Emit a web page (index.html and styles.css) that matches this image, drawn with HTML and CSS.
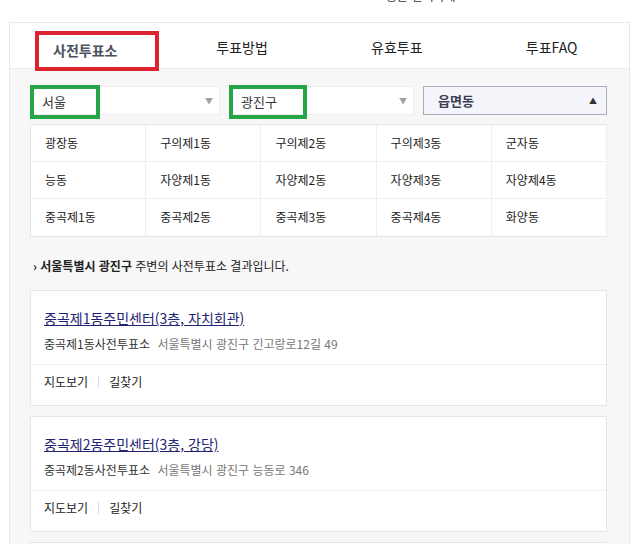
FILE: index.html
```html
<!DOCTYPE html>
<html lang="ko">
<head>
    <meta charset="UTF-8">
    <meta name="viewport" content="width=device-width, initial-scale=1.0">
    <title>사전투표소</title>
    <link rel="stylesheet" href="styles.css">
</head>
<body>
    <div class="top-cut">
        <p class="top-text">동을 선택하세요</p>
    </div>

    <div class="vote-panel">
        <!-- Tabs -->
        <ul class="tabs">
            <li class="tab active"><span class="mark-red">사전투표소</span></li>
            <li class="tab">투표방법</li>
            <li class="tab">유효투표</li>
            <li class="tab">투표FAQ</li>
        </ul>

        <div class="panel-body">
            <!-- Region selects -->
            <div class="selects">
                <div class="select">
                    <span class="mark-green">서울</span>
                    <span class="arrow">&#9660;</span>
                </div>
                <div class="select">
                    <span class="mark-green">광진구</span>
                    <span class="arrow">&#9660;</span>
                </div>
                <div class="select open">
                    <span class="select-label">읍면동</span>
                    <span class="arrow up">&#9650;</span>
                </div>
            </div>

            <ul class="dong-grid">
                <li>광장동</li>
                <li>구의제1동</li>
                <li>구의제2동</li>
                <li>구의제3동</li>
                <li>군자동</li>
                <li>능동</li>
                <li>자양제1동</li>
                <li>자양제2동</li>
                <li>자양제3동</li>
                <li>자양제4동</li>
                <li>중곡제1동</li>
                <li>중곡제2동</li>
                <li>중곡제3동</li>
                <li>중곡제4동</li>
                <li>화양동</li>
            </ul>

            <p class="result-info"><span class="chev">&#8250;</span> <b>서울특별시 광진구</b> 주변의 사전투표소 결과입니다.</p>

            <div class="place-card">
                <div class="place-main">
                    <a class="place-title" href="#">중곡제1동주민센터(3층, 자치회관)</a>
                    <p class="place-sub">중곡제1동사전투표소 <span class="addr">서울특별시 광진구 긴고랑로12길 49</span></p>
                </div>
                <div class="place-links">
                    <a href="#">지도보기</a><span class="sep"></span><a href="#">길찾기</a>
                </div>
            </div>

            <div class="place-card">
                <div class="place-main">
                    <a class="place-title" href="#">중곡제2동주민센터(3층, 강당)</a>
                    <p class="place-sub">중곡제2동사전투표소 <span class="addr">서울특별시 광진구 능동로 346</span></p>
                </div>
                <div class="place-links">
                    <a href="#">지도보기</a><span class="sep"></span><a href="#">길찾기</a>
                </div>
            </div>

            <div class="place-card last"></div>
        </div>
    </div>
</body>
</html>
```

FILE: styles.css
```css
* {
    margin: 0;
    padding: 0;
    box-sizing: border-box;
}

body {
    font-family: "Noto Sans CJK KR", "Noto Sans", sans-serif;
    color: #222;
    background-color: #ffffff;
    font-size: 12px;
    height: 544px;
    overflow: hidden;
}

.top-cut {
    height: 22px;
    overflow: hidden;
    padding-left: 386px;
}

.top-text {
    margin-top: -12px;
    font-size: 12px;
    line-height: 16px;
    color: #333;
}

.vote-panel {
    margin-left: 9px;
    width: 621px;
    border: 1px solid #e8e8e8;
    border-bottom: none;
}

.tabs {
    list-style: none;
    display: grid;
    grid-template-columns: repeat(4, minmax(0, 1fr));
    height: 46px;
    background-color: #ffffff;
    border-bottom: 1px solid #ececec;
}

.tab {
    display: flex;
    align-items: center;
    justify-content: center;
    font-size: 14px;
    color: #222;
}

.tab.active {
    align-items: flex-start;
    justify-content: flex-start;
    padding-left: 25px;
    color: #4a5261;
    font-weight: bold;
}

.mark-red {
    display: inline-block;
    width: 124px;
    height: 40px;
    margin-top: 8px;
    border: 4px solid #dc2430;
    padding-left: 14px;
    line-height: 30px;
    position: relative;
    z-index: 1;
}

.panel-body {
    background-color: #f7f7f7;
    padding: 17px 22px 0 20px;
}

.selects {
    display: grid;
    grid-template-columns: 190px 185px 1fr;
    column-gap: 9px;
    height: 29px;
}

.select {
    height: 29px;
    background-color: #ffffff;
    border: 1px solid #eeeeee;
    display: flex;
    align-items: center;
}

.select.open {
    background-color: #f3f5fa;
    border-color: #a8adb9;
    padding-left: 14px;
}

.mark-green {
    align-self: flex-start;
    height: 34px;
    margin-top: -2px;
    margin-left: -1px;
    border: 4px solid #25a548;
    padding-left: 8px;
    line-height: 25px;
    font-size: 13px;
    color: #333;
}

.select:first-child .mark-green {
    width: 70px;
}

.select:nth-child(2) .mark-green {
    width: 78px;
}

.select-label {
    font-size: 13px;
    font-weight: bold;
    color: #3b4050;
}

.arrow {
    margin-left: auto;
    margin-right: 6px;
    font-size: 8px;
    color: #a0a0a0;
}

.arrow.up {
    color: #333;
    margin-right: 9px;
}

.dong-grid {
    list-style: none;
    margin-top: 9px;
    display: grid;
    grid-template-columns: repeat(5, 1fr);
    background-color: #ffffff;
    border: 1px solid #e5e5e5;
    border-right: none;
}

.dong-grid li {
    height: 37px;
    line-height: 36px;
    padding-left: 14px;
    font-size: 12px;
    color: #222;
    border-right: 1px solid #eeeeee;
    border-bottom: 1px solid #eeeeee;
}

.dong-grid li:nth-last-child(-n+5) {
    border-bottom: none;
}

.result-info {
    margin-top: 21px;
    padding-left: 3px;
    font-size: 12px;
    line-height: 16px;
    color: #222;
}

.chev {
    font-weight: bold;
}

.place-card {
    margin-top: 16px;
    background-color: #ffffff;
    border: 1px solid #e6e6e6;
}

.place-card + .place-card {
    margin-top: 10px;
}

.place-card.last {
    height: 40px;
}

.place-main {
    padding: 18px 13px 12px;
    border-bottom: 1px solid #efefef;
}

.place-title {
    font-size: 14px;
    line-height: 18px;
    color: #232373;
    text-decoration: underline;
}

.place-sub {
    margin-top: 9px;
    font-size: 12px;
    line-height: 16px;
    color: #333;
}

.addr {
    margin-left: 4px;
    color: #777;
}

.place-links {
    display: flex;
    align-items: center;
    height: 33px;
    margin-bottom: 7px;
    padding-left: 13px;
}

.place-links a {
    font-size: 12px;
    color: #222;
    text-decoration: none;
}

.sep {
    display: inline-block;
    width: 1px;
    height: 12px;
    margin: 0 10px;
    background-color: #dddddd;
}
```
